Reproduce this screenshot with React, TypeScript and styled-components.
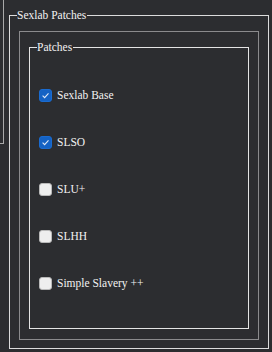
import { useState } from 'react';
import styled, { createGlobalStyle } from 'styled-components';

const GlobalStyle = createGlobalStyle`
  html, body {
    margin: 0;
    padding: 0;
    background: #2c2d30;
  }
`;

const serif = `"Liberation Serif", "Times New Roman", "DejaVu Serif", serif`;

const PageStyled = styled.div`
  display: flex;
  align-items: flex-start;
  width: 272px;
  height: 352px;
  background: #2c2d30;
  overflow: hidden;
  box-sizing: border-box;
  font-family: ${serif};
`;

const SideStub = styled.div`
  width: 4px;
  height: 144px;
  flex-shrink: 0;
  box-sizing: border-box;
  border-right: 1px solid #a9a9a9;
  border-bottom: 1px solid #a9a9a9;
`;

const GroupBox = styled.fieldset<{ $color: string; $pb: number }>`
  display: flex;
  flex-direction: column;
  margin: 0;
  min-inline-size: 0;
  box-sizing: border-box;
  border: 1px solid ${(p) => p.$color};
  padding: 8px 9px ${(p) => p.$pb}px 9px;
  font-family: ${serif};
`;

const OuterGroup = styled(GroupBox)`
  width: 260px;
  height: 341px;
  margin: 8px 0 0 5px;
`;

const InnerGroup = styled(GroupBox)`
  flex: 1;
  padding-top: 33px;
  gap: 32px;
`;

const Legend = styled.legend`
  margin-left: -2px;
  padding: 0 1px 0 0;
  font-family: ${serif};
  font-size: 11.5px;
  line-height: 15px;
  color: #f2f2f2;
`;

const Frame = styled.div`
  flex: 1;
  display: flex;
  flex-direction: column;
  border: 1px solid #8b8b8d;
  padding: 8px 9px 10px 9px;
`;

const Row = styled.label`
  display: flex;
  align-items: center;
  gap: 5px;
  height: 15px;
  font-family: ${serif};
  font-size: 11.5px;
  line-height: 15px;
  color: #f2f2f2;
  cursor: default;
`;

const Box = styled.span<{ $checked: boolean }>`
  width: 13px;
  height: 13px;
  box-sizing: border-box;
  border-radius: 3px;
  display: flex;
  align-items: center;
  justify-content: center;
  flex-shrink: 0;
  background: ${(p) => (p.$checked ? '#1462c4' : '#eeeeee')};
  border: 1px solid ${(p) => (p.$checked ? '#1a6bd0' : '#b9b9b9')};
`;

const patches = [
  { id: 'base', name: 'Sexlab Base', on: true },
  { id: 'slso', name: 'SLSO', on: true },
  { id: 'slu', name: 'SLU+', on: false },
  { id: 'slhh', name: 'SLHH', on: false },
  { id: 'ssl', name: 'Simple Slavery ++', on: false },
];

const App = () => {
  const [state, setState] = useState(patches);

  const toggle = (id: string) =>
    setState((s) => s.map((p) => (p.id === id ? { ...p, on: !p.on } : p)));

  return (
    <PageStyled>
      <GlobalStyle />
      <SideStub />
      <OuterGroup $color="#dcdcdc" $pb={8}>
        <Legend>Sexlab Patches</Legend>
        <Frame>
          <InnerGroup $color="#e4e4e4" $pb={10}>
            <Legend>Patches</Legend>
            {state.map((p) => (
              <Row key={p.id} onClick={() => toggle(p.id)}>
                <Box $checked={p.on}>
                  {p.on && (
                    <svg width="9" height="9" viewBox="0 0 9 9">
                      <path
                        d="M1.6 4.7 L3.6 6.6 L7.5 2.4"
                        fill="none"
                        stroke="#dfe9f7"
                        strokeWidth="1.1"
                      />
                    </svg>
                  )}
                </Box>
                {p.name}
              </Row>
            ))}
          </InnerGroup>
        </Frame>
      </OuterGroup>
    </PageStyled>
  );
};

export default App;
